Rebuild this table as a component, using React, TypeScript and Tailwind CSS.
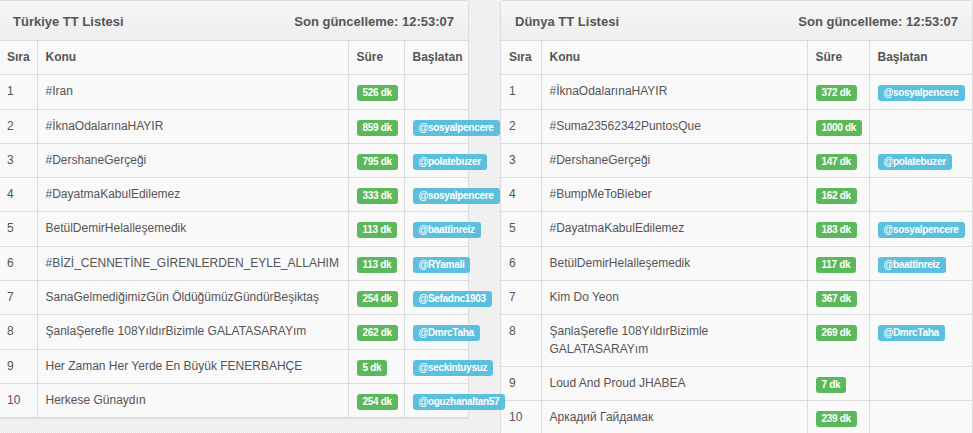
import React from "react";

type Row = { topic: string; time: string; by?: string };

const turkey: Row[] = [
  { topic: "#Iran", time: "526 dk" },
  { topic: "#İknaOdalarınaHAYIR", time: "859 dk", by: "@sosyalpencere" },
  { topic: "#DershaneGerçeği", time: "795 dk", by: "@polatebuzer" },
  { topic: "#DayatmaKabulEdilemez", time: "333 dk", by: "@sosyalpencere" },
  { topic: "BetülDemirHelalleşemedik", time: "113 dk", by: "@baattinreiz" },
  { topic: "#BİZİ_CENNETİNE_GİRENLERDEN_EYLE_ALLAHIM", time: "113 dk", by: "@RYamali" },
  { topic: "SanaGelmediğimizGün ÖldüğümüzGündürBeşiktaş", time: "254 dk", by: "@Sefadnc1903" },
  { topic: "ŞanlaŞerefle 108YıldırBizimle GALATASARAYım", time: "262 dk", by: "@DmrcTaha" },
  { topic: "Her Zaman Her Yerde En Büyük FENERBAHÇE", time: "5 dk", by: "@seckintuysuz" },
  { topic: "Herkese Günaydın", time: "254 dk", by: "@oguzhanaltan57" },
];

const world: Row[] = [
  { topic: "#İknaOdalarınaHAYIR", time: "372 dk", by: "@sosyalpencere" },
  { topic: "#Suma23562342PuntosQue", time: "1000 dk" },
  { topic: "#DershaneGerçeği", time: "147 dk", by: "@polatebuzer" },
  { topic: "#BumpMeToBieber", time: "162 dk" },
  { topic: "#DayatmaKabulEdilemez", time: "183 dk", by: "@sosyalpencere" },
  { topic: "BetülDemirHelalleşemedik", time: "117 dk", by: "@baattinreiz" },
  { topic: "Kim Do Yeon", time: "367 dk" },
  { topic: "ŞanlaŞerefle 108YıldırBizimle GALATASARAYım", time: "269 dk", by: "@DmrcTaha" },
  { topic: "Loud And Proud JHABEA", time: "7 dk" },
  { topic: "Аркадий Гайдамак", time: "239 dk" },
];

const Badge = ({ text, blue }: { text: string; blue?: boolean }) => (
  <span
    className={`relative top-[2px] inline-block whitespace-nowrap rounded-[3px] px-[6px] pt-[3px] pb-[3px] align-top text-[10px] font-bold leading-[10px] tracking-[-0.3px] text-white ${
      blue ? "bg-[#5bc0de]" : "bg-[#5cb85c]"
    }`}
  >
    {text}
  </span>
);

const Panel = ({
  title,
  rows,
  cols,
  className,
}: {
  title: string;
  rows: Row[];
  cols: string[];
  className: string;
}) => (
  <div className={`${className} shrink-0 rounded-[3px] border border-[#dcdcdc] bg-[#f9f9f9] shadow-[0_1px_1px_rgba(0,0,0,0.08)]`}>
    <div className="flex h-[40px] items-center justify-between border-b border-[#dcdcdc] bg-gradient-to-b from-[#f6f6f6] to-[#eeeeee] px-[14px] pt-[2px] text-[13px] font-bold text-[#555]">
      <span>{title}</span>
      <span>Son güncelleme: 12:53:07</span>
    </div>
    <table className="w-full table-fixed border-collapse text-[12px] leading-[17.3px] text-[#555]">
      <colgroup>
        {cols.map((w, i) => (
          <col key={i} className={w} />
        ))}
      </colgroup>
      <thead>
        <tr className="text-left font-bold">
          <th className="px-[8px] py-[8px]">Sıra</th>
          <th className="border-l border-[#dcdcdc] px-[8px] py-[8px]">Konu</th>
          <th className="border-l border-[#dcdcdc] px-[8px] py-[8px]">Süre</th>
          <th className="border-l border-[#dcdcdc] px-[8px] py-[8px]">Başlatan</th>
        </tr>
      </thead>
      <tbody>
        {rows.map((r, i) => (
          <tr key={i} className="border-t border-[#dcdcdc] align-top">
            <td className="px-[8px] py-[8px]">{i + 1}</td>
            <td className="border-l border-[#dcdcdc] px-[8px] py-[8px]">{r.topic}</td>
            <td className="border-l border-[#dcdcdc] px-[8px] py-[8px]">
              <Badge text={r.time} />
            </td>
            <td className="overflow-visible border-l border-[#dcdcdc] px-[8px] py-[8px]">
              {r.by && <Badge text={r.by} blue />}
            </td>
          </tr>
        ))}
      </tbody>
    </table>
  </div>
);

export default function App() {
  return (
    <div className="h-[433px] w-[973px] overflow-hidden bg-[#f3f3f3] bg-[image:repeating-conic-gradient(#e9e9e9_0_25%,#f7f7f7_0_50%)] bg-[length:2px_2px] font-['Liberation_Sans',Arial,sans-serif]">
      <div className="ml-[-2px] flex items-start gap-[31px]">
        <Panel
          title="Türkiye TT Listesi"
          rows={turkey}
          cols={["w-[38px]", "w-[311px]", "w-[56px]", "w-auto"]}
          className="w-[471px]"
        />
        <Panel
          title="Dünya TT Listesi"
          rows={world}
          cols={["w-[40px]", "w-[266px]", "w-[62px]", "w-auto"]}
          className="w-[473px]"
        />
      </div>
    </div>
  );
}
